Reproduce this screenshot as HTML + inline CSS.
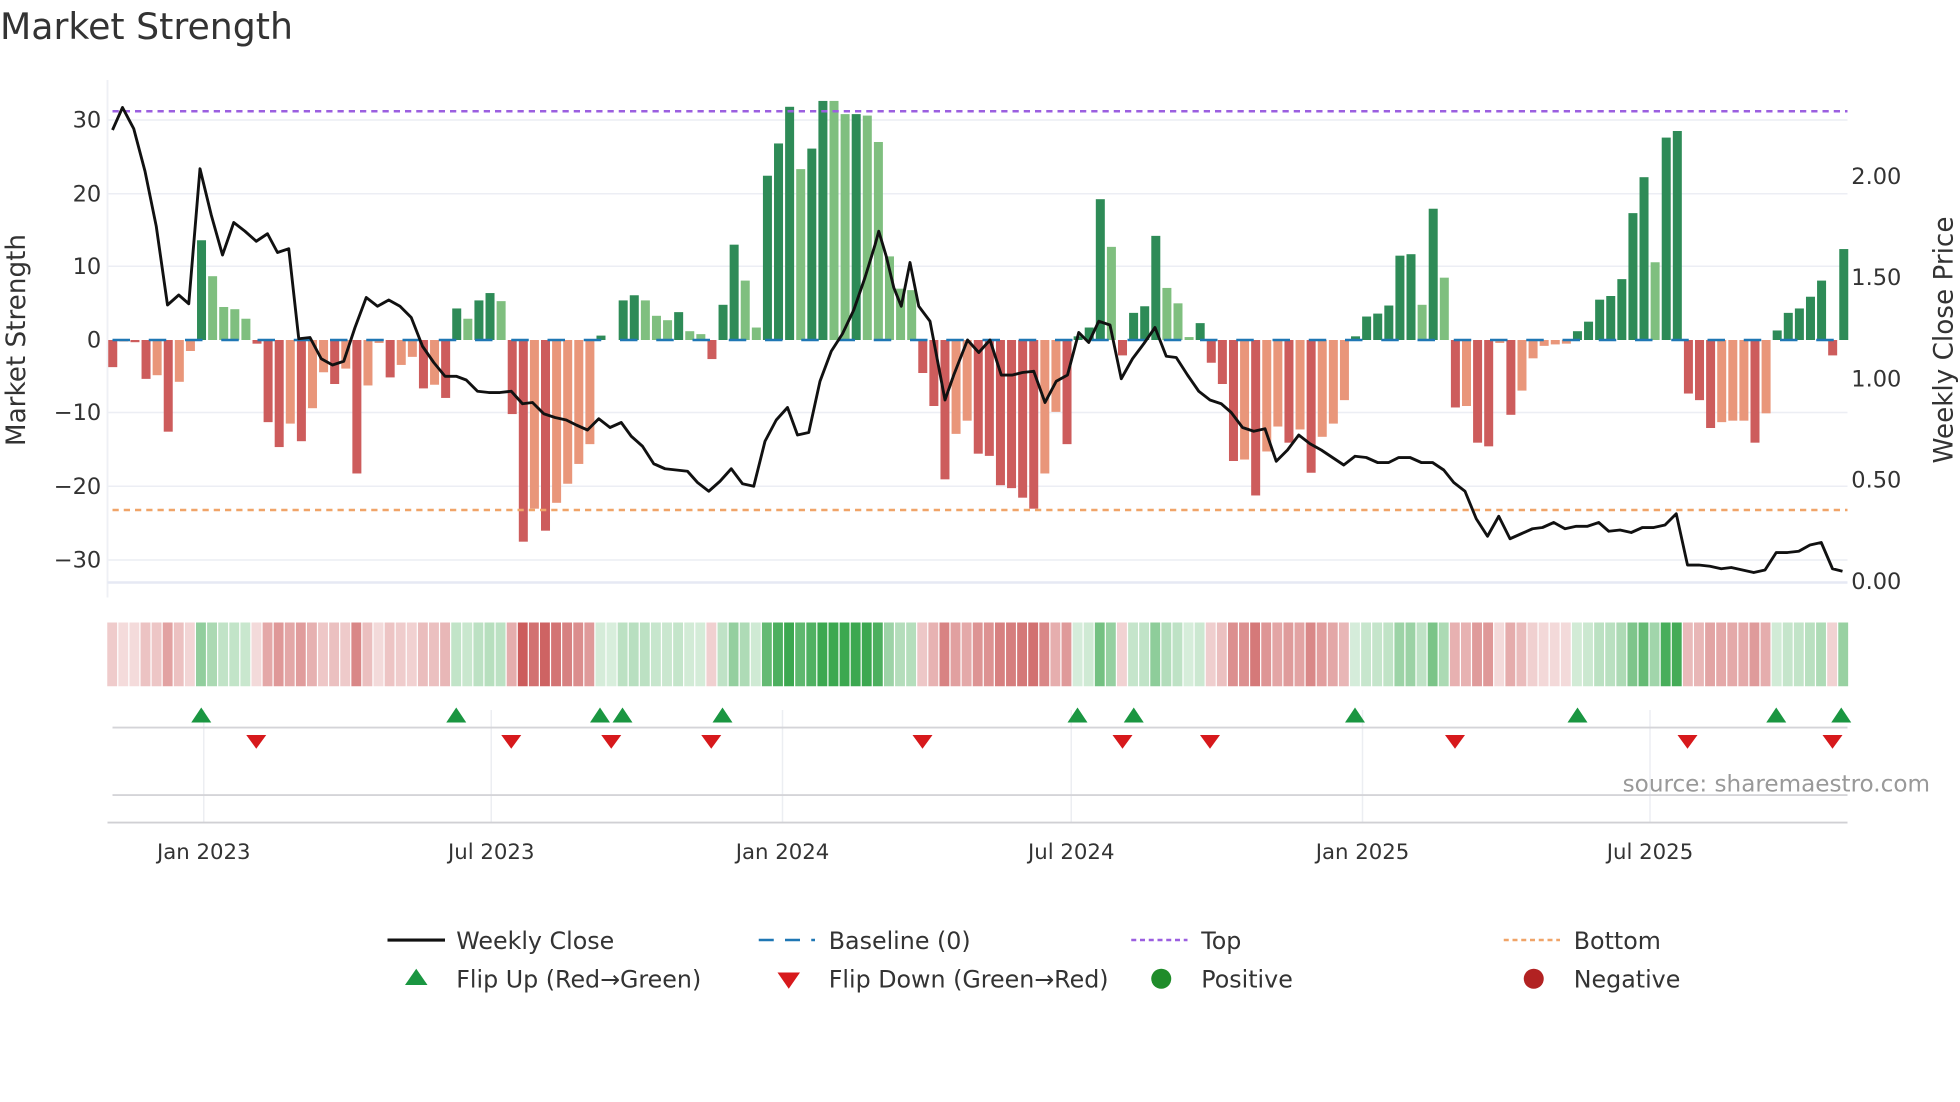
<!DOCTYPE html>
<html><head><meta charset="utf-8"><style>
html,body{margin:0;padding:0;background:#fff;}
svg{display:block;font-family:"DejaVu Sans","Liberation Sans",sans-serif;}
</style></head><body>
<svg id="c" width="1960" height="1102" viewBox="0 0 1568 881.6" xmlns="http://www.w3.org/2000/svg">
<rect width="1568" height="882" fill="#fff"/>
<text x="0" y="31" font-size="29" fill="#333">Market Strength</text>
<g stroke="#eceef4" stroke-width="1.2">
<line x1="86" x2="1478" y1="96" y2="96"/><line x1="86" x2="1478" y1="155" y2="155"/>
<line x1="86" x2="1478" y1="213" y2="213"/><line x1="86" x2="1478" y1="330" y2="330"/>
<line x1="86" x2="1478" y1="389" y2="389"/><line x1="86" x2="1478" y1="448" y2="448"/>
</g>
<line x1="86" x2="86" y1="64" y2="478" stroke="#eef0f5" stroke-width="1.5"/>
<line x1="86" x2="1478" y1="466" y2="466" stroke="#e6e9f4" stroke-width="2"/>
<g id="bars"></g>
<g id="base"></g>
<line x1="90" x2="1478" y1="89" y2="89" stroke="#9b5fe0" stroke-width="2" stroke-dasharray="5,4"/>
<line x1="90" x2="1478" y1="408" y2="408" stroke="#f0a468" stroke-width="2" stroke-dasharray="5,4"/>
<polyline id="ln" fill="none" stroke="#111" stroke-width="2.3" stroke-linejoin="round"/>
<g font-size="18" fill="#333" text-anchor="end">
<text x="81" y="102">30</text><text x="81" y="161">20</text><text x="81" y="219">10</text>
<text x="81" y="278">0</text><text x="81" y="336">−10</text><text x="81" y="395">−20</text><text x="81" y="454">−30</text>
</g>
<g font-size="18" fill="#333">
<text x="1481" y="147">2.00</text><text x="1481" y="228">1.50</text><text x="1481" y="309">1.00</text>
<text x="1481" y="390">0.50</text><text x="1481" y="471">0.00</text>
</g>
<text transform="translate(20,272) rotate(-90)" font-size="21" fill="#333" text-anchor="middle">Market Strength</text>
<text transform="translate(1562,272) rotate(-90)" font-size="21" fill="#333" text-anchor="middle">Weekly Close Price</text>
<g id="strip"></g>
<g stroke="#eceef2" stroke-width="1.2">
<line x1="163" x2="163" y1="568" y2="658"/><line x1="393" x2="393" y1="568" y2="658"/>
<line x1="626" x2="626" y1="568" y2="658"/><line x1="857" x2="857" y1="568" y2="658"/>
<line x1="1090" x2="1090" y1="568" y2="658"/><line x1="1320" x2="1320" y1="568" y2="658"/>
</g>
<line x1="90" x2="1478" y1="582" y2="582" stroke="#d4d4d8" stroke-width="1.5"/>
<line x1="90" x2="1478" y1="636" y2="636" stroke="#d4d4d8" stroke-width="1.5"/>
<line x1="86" x2="1478" y1="658" y2="658" stroke="#d0d0d4" stroke-width="1.5"/>
<g id="mk"></g>
<text x="1544" y="633" font-size="18.5" fill="#999" text-anchor="end">source: sharemaestro.com</text>
<g font-size="17" fill="#333" text-anchor="middle">
<text x="163" y="687">Jan 2023</text><text x="393" y="687">Jul 2023</text><text x="626" y="687">Jan 2024</text>
<text x="857" y="687">Jul 2024</text><text x="1090" y="687">Jan 2025</text><text x="1320" y="687">Jul 2025</text>
</g>
<g font-size="19" fill="#333">
<line x1="310" x2="356" y1="752" y2="752" stroke="#111" stroke-width="2.5"/>
<text x="365" y="759">Weekly Close</text>
<line x1="607" x2="652" y1="752" y2="752" stroke="#1f77b4" stroke-width="2" stroke-dasharray="12,9"/>
<text x="663" y="759">Baseline (0)</text>
<line x1="905" x2="950" y1="752" y2="752" stroke="#9b5fe0" stroke-width="2" stroke-dasharray="4,3"/>
<text x="961" y="759">Top</text>
<line x1="1203" x2="1248" y1="752" y2="752" stroke="#f0a468" stroke-width="2" stroke-dasharray="4,3"/>
<text x="1259" y="759">Bottom</text>
<polygon points="333,775 342,788 324,788" fill="#1a9641"/>
<text x="365" y="790">Flip Up (Red→Green)</text>
<polygon points="622,778 640,778 631,791" fill="#d7191c"/>
<text x="663" y="790">Flip Down (Green→Red)</text>
<circle cx="929" cy="783" r="8" fill="#1f8c2a"/>
<text x="961" y="790">Positive</text>
<circle cx="1227" cy="783" r="8" fill="#b22222"/>
<text x="1259" y="790">Negative</text>
</g>
</svg>
<script>
var V="-3.7d,-0.2l,-0.3d,-5.3d,-4.8l,-12.5d,-5.7l,-1.5l,13.6d,8.7l,4.5l,4.2l,2.9l,-0.5d,-11.2d,-14.6d,-11.4l,-13.8d,-9.3l,-4.4l,-6d,-3.9l,-18.2d,-6.2l,-0.4l,-5.1d,-3.4l,-2.3l,-6.6d,-6.1l,-7.9d,4.3d,2.9l,5.4d,6.4d,5.3l,-10.1d,-27.5d,-23l,-26d,-22.2l,-19.6l,-16.9l,-14.2l,0.6d,0l,5.4d,6.1d,5.4l,3.3l,2.7l,3.8d,1.2l,0.8l,-2.6d,4.8d,13d,8.1l,1.7l,22.4d,26.8d,31.8d,23.3l,26.1d,32.6d,32.6l,30.8l,30.8d,30.6l,27l,11.4l,7l,6.8l,-4.5d,-9d,-19d,-12.8l,-11l,-15.5d,-15.8d,-19.8d,-20.2d,-21.5d,-23d,-18.2l,-9.8l,-14.2d,0.5d,1.7d,19.2d,12.7l,-2.1d,3.7d,4.6d,14.2d,7.1l,5l,0.4l,2.3d,-3.1d,-6d,-16.5d,-16.3l,-21.2d,-15.2l,-11.8l,-14d,-12.2l,-18.1d,-13.2l,-11.4l,-8.2l,0.5d,3.2d,3.6d,4.7d,11.5d,11.7d,4.8l,17.9d,8.5l,-9.2d,-9l,-14d,-14.5d,-0.4l,-10.2d,-6.9l,-2.5l,-0.8l,-0.6l,-0.5l,1.2d,2.5d,5.5d,6d,8.3d,17.3d,22.2d,10.6l,27.6d,28.5d,-7.3d,-8.2d,-12d,-11.2l,-11l,-11l,-14d,-10l,1.3d,3.7d,4.3d,5.9d,8.1d,-2.1d,12.4d".split(",");
var NS="http://www.w3.org/2000/svg";
function el(t,a,p){var e=document.createElementNS(NS,t);for(var k in a)e.setAttribute(k,a[k]);document.getElementById(p).appendChild(e);return e;}
var x0=90.2,pw=8.877,y0=272,u=5.867;
for(var i=0;i<V.length;i++){var s=V[i],v=parseFloat(s),d=s.slice(-1)=="d";var cx=x0+i*pw;
 var c=v>=0?(d?"#2e8b57":"#7fbf7f"):(d?"#cd5c5c":"#e9967a");
 var h=Math.abs(v)*u;if(h>0.3)el("rect",{x:cx-3.6,y:v>=0?y0-h:y0,width:7.2,height:h,fill:c},"bars");
 var t=Math.min(Math.abs(v)/30,1),a=0.2+0.8*t;
 var base=v>=0?[60,168,80]:[200,80,80];
 var col="rgb("+base.map(function(b){return Math.round(255-(255-b)*a)}).join(",")+")";
 el("rect",{x:cx-4.4,y:498,width:7.9,height:51,fill:col},"strip");
}
for(var x=90;x<1478;x+=29)el("line",{x1:x,x2:Math.min(x+14,1478),y1:272,y2:272,stroke:"#1f77b4","stroke-width":2},"base");
var P="90,104 98,86 107,103 116,137 125,181 134,244 143,236 151,243 160,135 169,172 178,204 187,178 196,185 205,193 214,187 222,202 231,199 239,271 248,270 257,287 266,292 275,289 284,262 293,238 302,245 311,240 320,245 329,254 338,277 347,290 356,301 365,301 373,304 382,313 391,314 400,314 409,313 418,323 426,322 435,331 444,334 453,336 461,340 470,344 479,335 488,342 497,338 505,349 514,357 523,371 532,375 541,376 550,377 558,386 567,393 576,385 585,375 594,387 603,389 612,353 621,336 630,326 638,348 647,346 656,305 665,281 674,267 683,248 692,222 700,196 703,185 709,205 715,230 721,245 728,210 735,245 744,257 756,320 763,300 774,272 783,282 792,272 801,300 810,300 818,298 827,297 836,322 845,305 854,300 863,266 871,274 879,257 888,260 897,303 906,287 915,275 924,262 933,285 941,286 950,300 959,313 968,320 977,323 985,330 994,342 1003,345 1012,343 1021,369 1030,360 1039,348 1048,355 1057,360 1066,366 1075,372 1084,365 1093,366 1102,370 1111,370 1119,366 1128,366 1137,370 1146,370 1155,376 1163,386 1172,393 1181,415 1190,429 1199,413 1208,431 1217,427 1226,423 1234,422 1243,418 1252,423 1261,421 1270,421 1279,418 1287,425 1296,424 1305,426 1314,422 1323,422 1332,420 1341,411 1350,452 1359,452 1368,453 1377,455 1385,454 1394,456 1403,458 1412,456 1421,442 1430,442 1439,441 1448,436 1457,434 1466,455 1474,457";
document.getElementById("ln").setAttribute("points",P);
[161,365,480,498,578,862,907,1084,1262,1421,1473].forEach(function(x){el("polygon",{points:x+",566 "+(x+8)+",578 "+(x-8)+",578",fill:"#1a9641"},"mk");});
[205,409,489,569,738,898,968,1164,1350,1466].forEach(function(x){el("polygon",{points:(x-8)+",588 "+(x+8)+",588 "+x+",599",fill:"#d7191c"},"mk");});
</script>
</body></html>
